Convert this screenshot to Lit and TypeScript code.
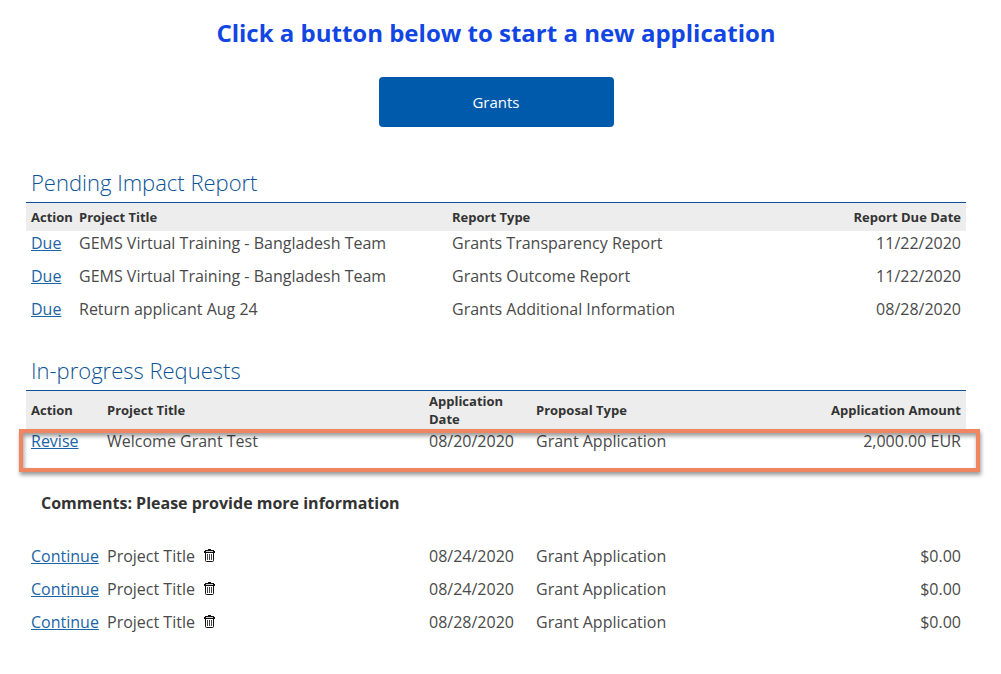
import { LitElement, html, css, svg, nothing } from "lit";
import { customElement } from "lit/decorators.js";

interface Report {
  title: string;
  type: string;
  due: string;
}

interface Application {
  action: string;
  title: string;
  date: string;
  type: string;
  amount: string;
  removable?: boolean;
  highlighted?: boolean;
  comment?: string;
}

const reports: Report[] = [
  { title: "GEMS Virtual Training - Bangladesh Team", type: "Grants Transparency Report", due: "11/22/2020" },
  { title: "GEMS Virtual Training - Bangladesh Team", type: "Grants Outcome Report", due: "11/22/2020" },
  { title: "Return applicant Aug 24", type: "Grants Additional Information", due: "08/28/2020" },
];

const applications: Application[] = [
  {
    action: "Revise",
    title: "Welcome Grant Test",
    date: "08/20/2020",
    type: "Grant Application",
    amount: "2,000.00 EUR",
    highlighted: true,
    comment: "Comments: Please provide more information",
  },
  { action: "Continue", title: "Project Title", date: "08/24/2020", type: "Grant Application", amount: "$0.00", removable: true },
  { action: "Continue", title: "Project Title", date: "08/24/2020", type: "Grant Application", amount: "$0.00", removable: true },
  { action: "Continue", title: "Project Title", date: "08/28/2020", type: "Grant Application", amount: "$0.00", removable: true },
];

const trashIcon = svg`
  <svg class="trash" viewBox="0 0 11 13" width="11" height="13" aria-hidden="true">
    <path d="M4 0h3v1h3v1h1v2H0V2h1V1h3z" fill="#111" />
    <path d="M2 2.500h7" stroke="#ccc" />
    <path d="M1.500 4v7.500q0 1 1 1h6q1 0 1-1V4" fill="#fff" stroke="#111" />
    <path d="M3.500 5v6M5.500 5v6M7.500 5v6" stroke="#444" />
  </svg>`;

@customElement("app-root")
export class AppRoot extends LitElement {
  static styles = css`
    :host {
      display: block;
      padding: 16px 35px 24px 26px;
      background: #fff;
      color: #333;
      font: 400 16px/22px "Open Sans", "Noto Sans", sans-serif;
    }
    .title {
      margin: 0;
      color: #1246e2;
      font-size: 24px;
      line-height: 34px;
      font-weight: 700;
      text-align: center;
    }
    .start {
      display: block;
      width: 25%;
      height: 50px;
      margin: 27px auto 0;
      border: 0;
      border-radius: 4px;
      background: #005aab;
      color: #fff;
      font: 400 15px/22px "Open Sans", "Noto Sans", sans-serif;
      cursor: pointer;
    }
    .section {
      margin-top: 39px;
    }
    .section + .section {
      margin-top: 24px;
    }
    .heading {
      margin: 0;
      padding: 0 5px 4px;
      border-bottom: 1px solid #0b5394;
      color: #0b5394;
      font-size: 22px;
      line-height: 32px;
      font-weight: 300;
    }
    .grid {
      width: 100%;
      table-layout: fixed;
      border-collapse: separate;
      border-spacing: 0;
      text-align: left;
    }
    .action-narrow {
      width: 48px;
    }
    .action-wide {
      width: 76px;
    }
    .report-title {
      width: 373px;
    }
    .app-title {
      width: 322px;
    }
    .app-date {
      width: 107px;
    }
    th {
      padding: 5px;
      background: #ededed;
      font-size: 13px;
      line-height: 18px;
      font-weight: 700;
      white-space: nowrap;
    }
    .compact th {
      padding: 1px 5px;
      white-space: normal;
    }
    td {
      padding: 1px 5px 10px;
      color: #4a4a4a;
      vertical-align: top;
    }
    .end {
      text-align: right;
    }
    .link {
      color: #1c64a6;
    }
    .highlighted {
      position: relative;
    }
    .frame {
      position: absolute;
      inset: 0 -14px -10px -7px;
      border: 4px solid #f08562;
      box-shadow: 1px 3px 4px rgba(0, 0, 0, 0.4), inset 1px 3px 4px rgba(0, 0, 0, 0.4);
      pointer-events: none;
    }
    .comment {
      padding: 30px 15px;
      color: #333;
      font-weight: 700;
    }
    .remove {
      margin: 0 0 0 5px;
      padding: 0;
      border: 0;
      background: none;
      cursor: pointer;
    }
    .trash {
      display: block;
    }
  `;

  private reportRow(r: Report) {
    return html`<tr>
      <td><a class="link" href="#due">Due</a></td>
      <td>${r.title}</td>
      <td>${r.type}</td>
      <td class="end">${r.due}</td>
    </tr>`;
  }

  private applicationRow(a: Application) {
    return html`<tr class=${a.highlighted ? "highlighted" : ""}>
        <td>
          <a class="link" href="#application">${a.action}</a>
          ${a.highlighted ? html`<span class="frame"></span>` : nothing}
        </td>
        <td>
          ${a.title}
          ${a.removable ? html`<button class="remove" type="button" aria-label="Delete ${a.title}">${trashIcon}</button>` : nothing}
        </td>
        <td>${a.date}</td>
        <td>${a.type}</td>
        <td class="end">${a.amount}</td>
      </tr>
      ${a.comment ? html`<tr><td class="comment" colspan="5">${a.comment}</td></tr>` : nothing}`;
  }

  render() {
    return html`
      <main>
        <h1 class="title">Click a button below to start a new application</h1>
        <button class="start" type="button">Grants</button>

        <section class="section">
          <h2 class="heading" id="pending">Pending Impact Report</h2>
          <table class="grid" aria-labelledby="pending">
            <colgroup><col class="action-narrow" /><col class="report-title" /><col /><col /></colgroup>
            <thead>
              <tr>
                <th scope="col">Action</th>
                <th scope="col">Project Title</th>
                <th scope="col">Report Type</th>
                <th scope="col" class="end">Report Due Date</th>
              </tr>
            </thead>
            <tbody>${reports.map((r) => this.reportRow(r))}</tbody>
          </table>
        </section>

        <section class="section">
          <h2 class="heading" id="progress">In-progress Requests</h2>
          <table class="grid compact" aria-labelledby="progress">
            <colgroup><col class="action-wide" /><col class="app-title" /><col class="app-date" /><col /><col /></colgroup>
            <thead>
              <tr>
                <th scope="col">Action</th>
                <th scope="col">Project Title</th>
                <th scope="col">Application Date</th>
                <th scope="col">Proposal Type</th>
                <th scope="col" class="end">Application Amount</th>
              </tr>
            </thead>
            <tbody>${applications.map((a) => this.applicationRow(a))}</tbody>
          </table>
        </section>
      </main>
    `;
  }
}
